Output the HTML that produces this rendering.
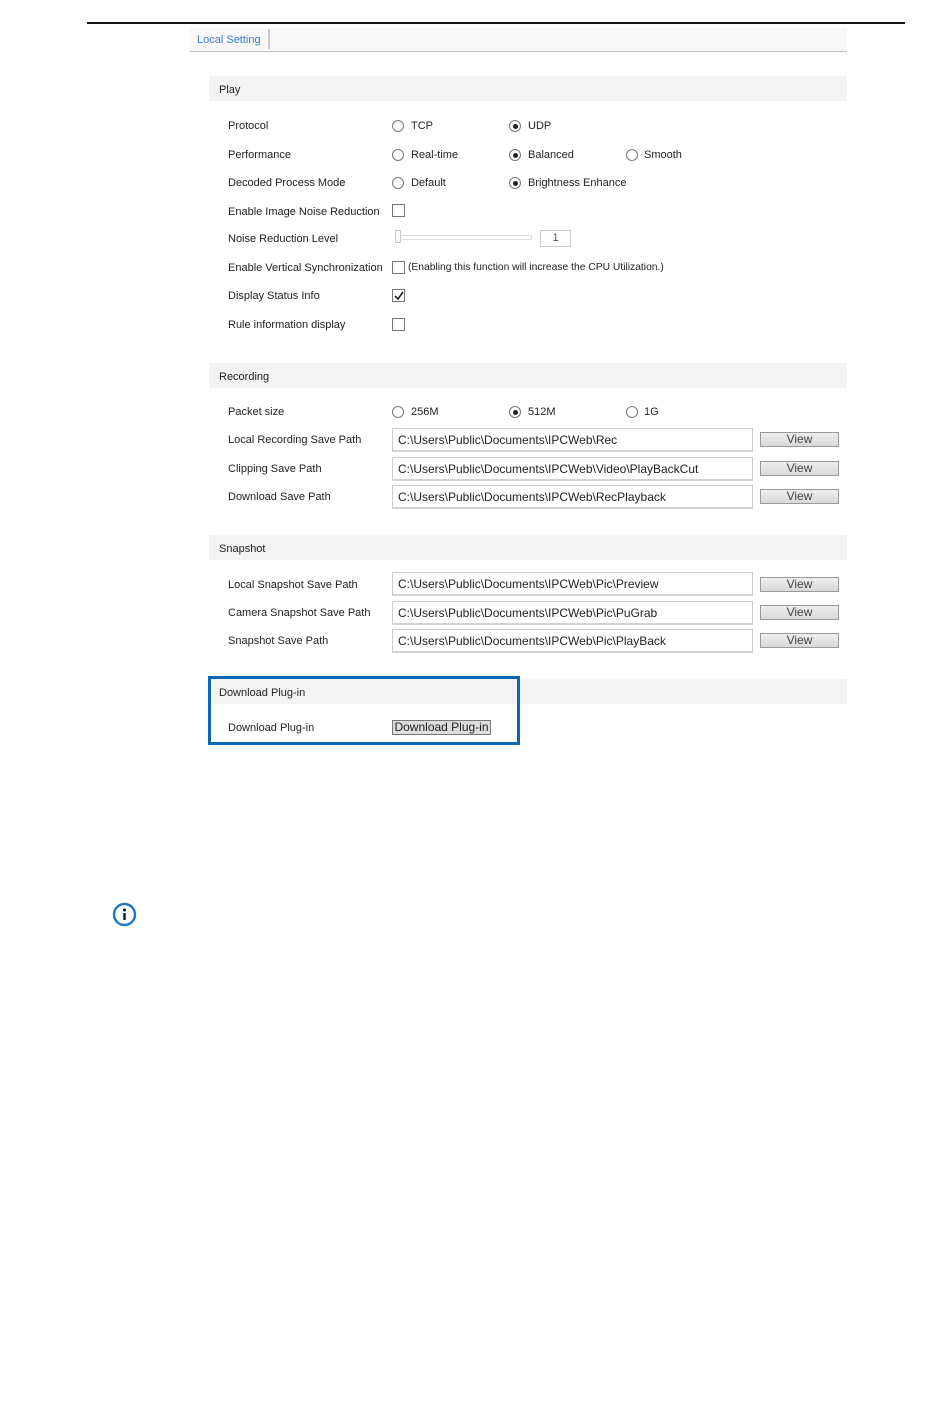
<!DOCTYPE html>
<html><head><meta charset="utf-8"><style>
body{margin:0;width:950px;height:1408px;background:#fff;position:relative;overflow:hidden;font-family:"Liberation Sans",Arial,sans-serif;color:#222}
.a{position:absolute}
.t{position:absolute;font-size:11px;line-height:14px;white-space:nowrap;margin-top:1px}
.h{position:absolute;left:209px;width:638px;height:25px;background:#f3f3f3}
.h span{position:absolute;left:10px;top:7px;font-size:11px;line-height:14px}
.r{position:absolute;width:10px;height:10px;border:1px solid #777;border-radius:50%;background:#fff}
.r.on::after{content:"";position:absolute;left:2.5px;top:2.5px;width:5px;height:5px;border-radius:50%;background:#222}
.c{position:absolute;width:11px;height:11px;border:1px solid #777;background:#fff}
.in{position:absolute;left:392px;border:1px solid #ccc;border-bottom:2px solid #d3d3d3;font-size:12px;line-height:22px;padding-left:5px;box-sizing:border-box;width:361px;height:24px}
.v{position:absolute;left:760px;width:79px;height:15px;border:1px solid #999;background:linear-gradient(#eee,#d9d9d9);box-sizing:border-box;font-size:12px;line-height:13px;text-align:center;color:#444}
</style></head><body>
<div class="a" style="left:87px;top:22px;width:818px;height:2px;background:#111"></div>
<div class="a" style="left:190px;top:28px;width:657px;height:23px;background:#f8f8f8;border-bottom:1px solid #bbb"></div>
<div class="t" style="left:197px;top:32px;color:#3a7cc9">Local Setting</div>
<div class="a" style="left:268px;top:29px;width:2px;height:20px;background:#ccc"></div>

<div class="h" style="top:76px"><span>Play</span></div>
<div class="t" style="left:228px;top:118px">Protocol</div>
<div class="r" style="left:392px;top:120px"></div><div class="t" style="left:411px;top:118px">TCP</div>
<div class="r on" style="left:509px;top:120px"></div><div class="t" style="left:528px;top:118px">UDP</div>
<div class="t" style="left:228px;top:147px">Performance</div>
<div class="r" style="left:392px;top:149px"></div><div class="t" style="left:411px;top:147px">Real-time</div>
<div class="r on" style="left:509px;top:149px"></div><div class="t" style="left:528px;top:147px">Balanced</div>
<div class="r" style="left:626px;top:149px"></div><div class="t" style="left:644px;top:147px">Smooth</div>
<div class="t" style="left:228px;top:175px">Decoded Process Mode</div>
<div class="r" style="left:392px;top:177px"></div><div class="t" style="left:411px;top:175px">Default</div>
<div class="r on" style="left:509px;top:177px"></div><div class="t" style="left:528px;top:175px">Brightness Enhance</div>
<div class="t" style="left:228px;top:204px">Enable Image Noise Reduction</div>
<div class="c" style="left:392px;top:204px"></div>
<div class="t" style="left:228px;top:231px">Noise Reduction Level</div>
<div class="a" style="left:396px;top:235px;width:134px;height:3px;border:1px solid #ddd"></div>
<div class="a" style="left:395px;top:230px;width:4px;height:11px;border:1px solid #ccc;background:#fff"></div>
<div class="a" style="left:540px;top:230px;width:29px;height:15px;border:1px solid #ccc;font-size:11px;line-height:15px;text-align:center;color:#555">1</div>
<div class="t" style="left:228px;top:260px">Enable Vertical Synchronization</div>
<div class="c" style="left:392px;top:261px"></div>
<div class="t" style="left:408px;top:260px;font-size:10.3px">(Enabling this function will increase the CPU Utilization.)</div>
<div class="t" style="left:228px;top:288px">Display Status Info</div>
<div class="c" style="left:392px;top:289px"></div>
<svg class="a" style="left:393px;top:290px" width="12" height="12"><path d="M2 6 L5 9 L10 2" stroke="#222" stroke-width="1.6" fill="none"/></svg>
<div class="t" style="left:228px;top:317px">Rule information display</div>
<div class="c" style="left:392px;top:318px"></div>

<div class="h" style="top:363px"><span>Recording</span></div>
<div class="t" style="left:228px;top:404px">Packet size</div>
<div class="r" style="left:392px;top:406px"></div><div class="t" style="left:411px;top:404px">256M</div>
<div class="r on" style="left:509px;top:406px"></div><div class="t" style="left:528px;top:404px">512M</div>
<div class="r" style="left:626px;top:406px"></div><div class="t" style="left:644px;top:404px">1G</div>
<div class="t" style="left:228px;top:432px">Local Recording Save Path</div>
<div class="in" style="top:428px">C:\Users\Public\Documents\IPCWeb\Rec</div><div class="v" style="top:432px">View</div>
<div class="t" style="left:228px;top:461px">Clipping Save Path</div>
<div class="in" style="top:457px">C:\Users\Public\Documents\IPCWeb\Video\PlayBackCut</div><div class="v" style="top:461px">View</div>
<div class="t" style="left:228px;top:489px">Download Save Path</div>
<div class="in" style="top:485px">C:\Users\Public\Documents\IPCWeb\RecPlayback</div><div class="v" style="top:489px">View</div>

<div class="h" style="top:535px"><span>Snapshot</span></div>
<div class="t" style="left:228px;top:577px">Local Snapshot Save Path</div>
<div class="in" style="top:572px">C:\Users\Public\Documents\IPCWeb\Pic\Preview</div><div class="v" style="top:577px">View</div>
<div class="t" style="left:228px;top:605px">Camera Snapshot Save Path</div>
<div class="in" style="top:601px">C:\Users\Public\Documents\IPCWeb\Pic\PuGrab</div><div class="v" style="top:605px">View</div>
<div class="t" style="left:228px;top:633px">Snapshot Save Path</div>
<div class="in" style="top:629px">C:\Users\Public\Documents\IPCWeb\Pic\PlayBack</div><div class="v" style="top:633px">View</div>

<div class="h" style="top:679px"><span>Download Plug-in</span></div>
<div class="t" style="left:228px;top:720px">Download Plug-in</div>
<div class="a" style="left:392px;top:720px;width:99px;height:15px;border:1px solid #777;background:#ddd;box-sizing:border-box;font-size:12px;line-height:13px;text-align:center;color:#222">Download Plug-in</div>
<div class="a" style="left:208px;top:676px;width:306px;height:63px;border:3px solid #0a68b4"></div>

<svg class="a" style="left:112px;top:902px" width="25" height="25"><circle cx="12.5" cy="12.5" r="10.5" fill="#fff" stroke="#1a78c2" stroke-width="2.4"/><circle cx="12.5" cy="8" r="1.5" fill="#111"/><rect x="11.3" y="11" width="2.4" height="7" fill="#111"/></svg>
</body></html>
